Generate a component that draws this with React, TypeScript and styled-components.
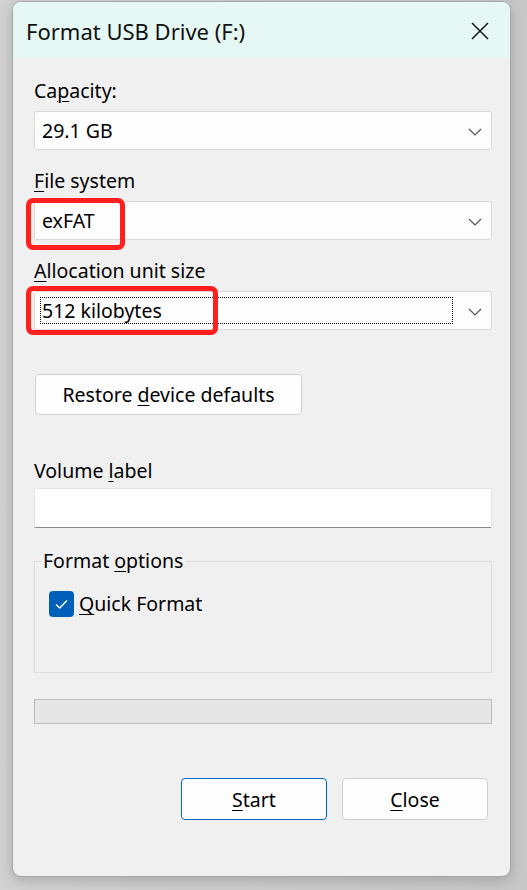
import styled, { createGlobalStyle } from 'styled-components';

const GlobalStyle = createGlobalStyle`
  html, body {
    margin: 0;
    padding: 0;
    background: #cfcfcf;
  }
  body {
    font-family: "Noto Sans", "Open Sans", sans-serif;
    color: #000;
    -webkit-font-smoothing: antialiased;
  }
  #root {
    padding: 1px 0 0 12px;
    height: 889px;
    background: linear-gradient(90deg, #d2d2d2 0%, #c8c8c8 100%);
  }
`;

const ChevronDown = () => (
  <svg width="14" height="8" viewBox="0 0 14 8">
    <path d="M1 1 L7 7 L13 1" fill="none" stroke="#555" strokeWidth="1.2" />
  </svg>
);

const CloseIcon = () => (
  <svg width="20" height="20" viewBox="0 0 20 20">
    <path d="M2 2 L18 18 M18 2 L2 18" stroke="#1a1a1a" strokeWidth="1.6" />
  </svg>
);

const CheckIcon = () => (
  <svg width="15" height="12" viewBox="0 0 15 12">
    <path d="M2 6.5 L5.8 10 L13 2.5" fill="none" stroke="#fff" strokeWidth="1.4" />
  </svg>
);

type ComboProps = {
  value: string
  focused?: boolean
  highlight?: { left: number; top: number; width: number; height: number }
}

const Combo = ({ value, focused, highlight }: ComboProps) => (
  <ComboBox>
    <ComboValue $focused={focused}>{value}</ComboValue>
    <Arrow>
      <ChevronDown />
    </Arrow>
    {highlight && (
      <Highlight
        style={{ left: highlight.left, top: highlight.top, width: highlight.width, height: highlight.height }}
      />
    )}
  </ComboBox>
);

const App = () => {
  return (
    <>
      <GlobalStyle />
      <Window>
        <TitleBar>
          <Title>Format USB Drive (F:)</Title>
          <CloseButton>
            <CloseIcon />
          </CloseButton>
        </TitleBar>
        <Content>
          <Field>
            <Label>Ca<u>p</u>acity:</Label>
            <Combo value="29.1 GB" />
          </Field>
          <Field>
            <Label><u>F</u>ile system</Label>
            <Combo value="exFAT" highlight={{ left: -9, top: -4, width: 99, height: 52 }} />
          </Field>
          <Field>
            <Label><u>A</u>llocation unit size</Label>
            <Combo value="512 kilobytes" focused highlight={{ left: -9, top: -6, width: 192, height: 49 }} />
          </Field>

          <RestoreButton>
            <span>Restore <u>d</u>evice defaults</span>
          </RestoreButton>

          <VolumeLabel>Volume <u>l</u>abel</VolumeLabel>
          <TextInput />

          <GroupBox>
            <Legend>Format <u>o</u>ptions</Legend>
            <CheckRow>
              <CheckBox>
                <CheckIcon />
              </CheckBox>
              <CheckText><u>Q</u>uick Format</CheckText>
            </CheckRow>
          </GroupBox>

          <Progress />

          <ButtonRow>
            <DialogButton $primary><span><u>S</u>tart</span></DialogButton>
            <DialogButton><span><u>C</u>lose</span></DialogButton>
          </ButtonRow>
        </Content>
      </Window>
    </>
  );
};

const Window = styled.div`
  width: 499px;
  height: 876px;
  box-sizing: border-box;
  border: 1px solid #a8a8a8;
  border-radius: 9px;
  background: #f0f0f0;
  overflow: hidden;
  display: flex;
  flex-direction: column;
  box-shadow: 0 4px 14px rgba(0, 0, 0, 0.18);
`;

const TitleBar = styled.div`
  height: 56px;
  flex-shrink: 0;
  background: #e6f8f4;
  display: flex;
  align-items: center;
  justify-content: space-between;
  padding: 0 20px 0 13px;
`;

const Title = styled.div`
  font-size: 22px;
  color: #111;
  padding-top: 2px;
`;

const CloseButton = styled.div`
  display: flex;
  align-items: center;
  padding-top: 2px;
`;

const Content = styled.div`
  flex: 1;
  display: flex;
  flex-direction: column;
  padding: 21px 18px 0 21px;
`;

const Field = styled.div`
  display: flex;
  flex-direction: column;
  margin-bottom: 19px;
`;

const Label = styled.div`
  font-size: 19.5px;
  line-height: 24px;
  height: 24px;
  margin-bottom: 8px;
  u {
    text-decoration-thickness: 1px;
    text-underline-offset: 3px;
  }
`;

const ComboBox = styled.div`
  position: relative;
  height: 39px;
  box-sizing: border-box;
  background: #fdfdfd;
  border: 1px solid #d9d9d9;
  border-radius: 3px;
  display: flex;
  align-items: center;
  padding: 0 9px 0 5px;
`;

const ComboValue = styled.div<{ $focused?: boolean }>`
  flex: 1;
  font-size: 19.5px;
  line-height: 25px;
  height: 27px;
  box-sizing: border-box;
  padding-left: 1px;
  margin-right: 15px;
  border: 1px dotted ${props => (props.$focused ? '#000' : 'transparent')};
`;

const Arrow = styled.div`
  display: flex;
  align-items: center;
  padding-top: 2px;
`;

const Highlight = styled.div`
  position: absolute;
  box-sizing: border-box;
  border: 5px solid #ff1f1f;
  border-radius: 7px;
  pointer-events: none;
`;

const RestoreButton = styled.div`
  margin-top: 25px;
  margin-left: 1px;
  width: 267px;
  height: 41px;
  box-sizing: border-box;
  border: 1px solid #d0d0d0;
  border-radius: 4px;
  background: #fdfdfd;
  font-size: 19.5px;
  display: flex;
  align-items: center;
  justify-content: center;
  u {
    text-underline-offset: 3px;
  }
`;

const VolumeLabel = styled(Label)`
  margin-top: 44px;
  margin-bottom: 5px;
`;

const TextInput = styled.div`
  height: 40px;
  box-sizing: border-box;
  background: #fff;
  border: 1px solid #e3e3e3;
  border-bottom: 1px solid #8a8a8a;
  border-radius: 2px;
`;

const GroupBox = styled.fieldset`
  margin: 22px 0 0;
  padding: 0 14px 0;
  height: 123px;
  box-sizing: border-box;
  border: 1px solid #dcdcdc;
  border-radius: 0;
`;

const Legend = styled.legend`
  font-size: 19.5px;
  line-height: 22px;
  padding: 0 2px 0 1px;
  margin-left: -7px;
  u {
    text-underline-offset: 3px;
  }
`;

const CheckRow = styled.div`
  display: flex;
  align-items: center;
  gap: 5px;
  margin-top: 18px;
`;

const CheckBox = styled.div`
  width: 25px;
  height: 26px;
  border-radius: 4px;
  background: #005fb8;
  display: flex;
  align-items: center;
  justify-content: center;
`;

const CheckText = styled.div`
  font-size: 19.5px;
  u {
    text-underline-offset: 3px;
  }
`;

const Progress = styled.div`
  margin-top: 26px;
  height: 25px;
  box-sizing: border-box;
  background: #e6e6e6;
  border: 1px solid #bcbcbc;
`;

const ButtonRow = styled.div`
  display: flex;
  justify-content: flex-end;
  gap: 15px;
  margin-top: 54px;
  padding-right: 4px;
`;

const DialogButton = styled.div<{ $primary?: boolean }>`
  width: 146px;
  height: 42px;
  box-sizing: border-box;
  border: 1px solid ${props => (props.$primary ? '#0067c0' : '#d0d0d0')};
  border-radius: 4px;
  background: #fdfdfd;
  font-size: 19.5px;
  display: flex;
  align-items: center;
  justify-content: center;
  u {
    text-underline-offset: 3px;
  }
`;

export default App;
